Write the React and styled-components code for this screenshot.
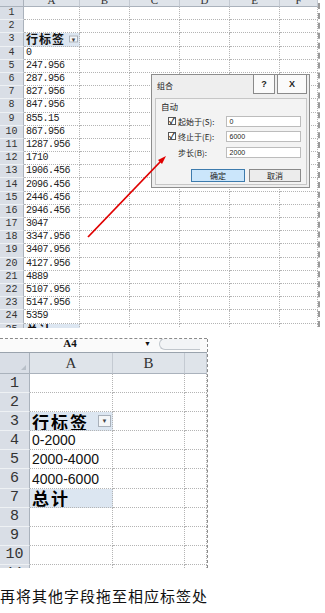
import React from "react";
import styled, { createGlobalStyle } from "styled-components";

const GlobalStyle = createGlobalStyle`
  html, body {
    margin: 0;
    padding: 0;
    background: #ffffff;
  }
  body {
    font-family: "Liberation Sans", "Noto Sans CJK SC", sans-serif;
    color: #111;
  }
`;

const topRows = [
  "", "", "行标签", "0", "247.956", "287.956", "827.956", "847.956", "855.15",
  "867.956", "1287.956", "1710", "1906.456", "2096.456", "2446.456", "2946.456",
  "3047", "3347.956", "3407.956", "4127.956", "4889", "5107.956", "5147.956",
  "5359", "总计"
];
const topCols = ["A", "B", "C", "D", "E", "F"];

const bottomRows = ["", "", "行标签", "0-2000", "2000-4000", "4000-6000", "总计", "", "", "", ""];

const Page = styled.div`
  position: relative;
  width: 325px;
  height: 613px;
  overflow: hidden;
  background: #fff;
`;

/* ---------- top sheet ---------- */

const TopSheet = styled.div`
  height: 328px;
  width: 320px;
  overflow: hidden;
`;

const TopGrid = styled.div`
  margin-top: -7px;
  display: grid;
  grid-template-columns: 24px 56px 50px 50px 50px 50px 38px;
  grid-template-rows: 14px;
  grid-auto-rows: 13.2px;
  width: 318px;
  border-right: 2px dashed #9a9a9a;
`;

const Corner = styled.div`
  background: #d9dee6;
  border-right: 1px solid #aab2bc;
  border-bottom: 1px solid #aab2bc;
`;

const ColHead = styled.div`
  background: #dfe4ea;
  border-right: 1px solid #c4cad2;
  border-bottom: 1px solid #aab2bc;
  font-family: "Liberation Serif", serif;
  font-size: ${(p) => p.$size || 11}px;
  color: #333;
  display: flex;
  align-items: center;
  justify-content: center;
`;

const RowHead = styled.div`
  background: #d9dee6;
  border-right: 1px solid #aab2bc;
  border-bottom: 1px solid #eef1f4;
  font-family: "Liberation Mono", "Liberation Serif", serif;
  font-size: ${(p) => p.$size}px;
  line-height: 1;
  color: #333;
  display: flex;
  align-items: center;
  justify-content: center;
  box-sizing: border-box;
`;

const Cell = styled.div`
  border-right: 1px dotted #b4b4b4;
  border-bottom: 1px dotted #b4b4b4;
  box-sizing: border-box;
  display: flex;
  align-items: center;
  padding-left: 2px;
  position: relative;
  overflow: hidden;
  white-space: nowrap;
  line-height: 1;
  background: ${(p) => (p.$label ? "#dce6f1" : "transparent")};
`;

const TopValue = styled.span`
  font-family: "Liberation Mono", monospace;
  font-size: 10px;
  letter-spacing: -0.5px;
  color: #222;
`;

const TopLabel = styled.span`
  font-family: "Noto Sans CJK SC", sans-serif;
  font-weight: 700;
  font-size: 12px;
  letter-spacing: 1px;
  color: #111;
`;

const FilterButton = styled.span`
  position: absolute;
  right: ${(p) => p.$right}px;
  top: 50%;
  transform: translateY(-50%);
  width: ${(p) => p.$w}px;
  height: ${(p) => p.$h}px;
  border: 1px solid #a8b0ba;
  background: #f4f6f8;
  box-sizing: border-box;
  display: flex;
  align-items: center;
  justify-content: center;
  font-size: 6px;
  color: #444;
`;

/* ---------- dialog ---------- */

const Dialog = styled.div`
  position: absolute;
  left: 151px;
  top: 74px;
  width: 159px;
  height: 114px;
  box-sizing: border-box;
  background: #eeeeee;
  border: 1px solid #8c8c8c;
  display: flex;
  flex-direction: column;
  font-family: "Noto Sans CJK SC", sans-serif;
  color: #222;
`;

const TitleBar = styled.div`
  height: 21px;
  display: flex;
  align-items: flex-start;
  padding-left: 5px;
`;

const TitleText = styled.span`
  font-size: 8px;
  line-height: 21px;
`;

const TitleButtons = styled.div`
  margin-left: auto;
  margin-right: 2px;
  display: flex;
  gap: 2px;
`;

const TitleBtn = styled.div`
  width: ${(p) => p.$w}px;
  height: 19px;
  box-sizing: border-box;
  border: 1px solid #8a8a8a;
  border-top: none;
  background: #fafafa;
  display: flex;
  align-items: center;
  justify-content: center;
  font-family: "Liberation Sans", sans-serif;
  font-weight: 700;
  font-size: 9px;
`;

const Frame = styled.div`
  margin: 2px 2px 2px 3px;
  flex: 1;
  border: 1px solid #c6c6c6;
  background: #f3f3f3;
  display: flex;
  flex-direction: column;
  padding: 2px 3px 0 5px;
`;

const GroupLabel = styled.div`
  font-size: 8.5px;
  line-height: 11px;
`;

const FieldRow = styled.div`
  display: flex;
  align-items: center;
  height: 14px;
  margin-top: ${(p) => p.$mt || 0}px;
`;

const Check = styled.span`
  width: 8px;
  height: 8px;
  box-sizing: border-box;
  border: 1px solid #555;
  background: #fff;
  margin-left: 7px;
  display: flex;
  align-items: center;
  justify-content: center;
  font-size: 8px;
  line-height: 1;
  font-weight: 700;
`;

const FieldLabel = styled.span`
  font-size: 8px;
  margin-left: ${(p) => p.$ml}px;
  width: ${(p) => p.$w}px;
  white-space: nowrap;
`;

const Input = styled.div`
  width: 76px;
  height: 11px;
  box-sizing: border-box;
  border: 1px solid #bcbcbc;
  background: #fff;
  font-family: "Liberation Sans", sans-serif;
  font-size: 7px;
  line-height: 9px;
  padding-left: 3px;
  margin-left: auto;
  margin-right: 2px;
`;

const ButtonRow = styled.div`
  display: flex;
  justify-content: flex-end;
  gap: 4px;
  margin-top: 10px;
  margin-right: 2px;
`;

const DlgButton = styled.div`
  width: ${(p) => p.$w}px;
  height: 13px;
  box-sizing: border-box;
  border: 1px solid ${(p) => (p.$primary ? "#3d7bad" : "#8a8a8a")};
  background: ${(p) => (p.$primary ? "#cbe6fb" : "#ececec")};
  font-size: 8px;
  display: flex;
  align-items: center;
  justify-content: center;
`;

/* ---------- bottom sheet ---------- */

const Separator = styled.div`
  margin-top: 10px;
  width: 207px;
  border-top: 1px dashed #8a8a8a;
`;

const BottomSheet = styled.div`
  width: 207px;
  height: 229px;
  overflow: hidden;
  border-right: 1px dashed #8a8a8a;
`;

const NameBar = styled.div`
  height: 13px;
  display: flex;
  align-items: center;
  border-bottom: 1px solid #9aa3ad;
  background: #fafafa;
`;

const NameText = styled.span`
  width: 140px;
  text-align: center;
  font-family: "Liberation Serif", serif;
  font-weight: 700;
  font-size: 11px;
  line-height: 9px;
  margin-top: -5px;
`;

const NameArrow = styled.span`
  font-size: 7px;
  margin-left: 4px;
  margin-top: -4px;
`;

const FxStub = styled.span`
  width: 40px;
  height: 10px;
  margin-left: 8px;
  margin-top: -4px;
  border: 1px solid #c0c6cc;
  border-right: none;
  border-radius: 6px 0 0 6px;
  background: #f2f4f6;
`;

const BottomGrid = styled.div`
  display: grid;
  grid-template-columns: 30px 83px 72px 22px;
  grid-template-rows: 21px;
  grid-auto-rows: 19.1px;
`;

const CornerMark = styled(Corner)`
  position: relative;
  &::after {
    content: "";
    position: absolute;
    right: 3px;
    bottom: 3px;
    border-left: 5px solid transparent;
    border-bottom: 5px solid #b8bfc8;
  }
`;

const BottomValue = styled.span`
  font-family: "Liberation Sans", sans-serif;
  font-size: 14px;
  color: #111;
`;

const BottomLabel = styled.span`
  font-family: "Noto Sans CJK SC", sans-serif;
  font-weight: 700;
  font-size: 17px;
  line-height: 17px;
  letter-spacing: 2px;
  color: #000;
`;

const Caption = styled.p`
  margin: 20px 0 0 0;
  font-family: "Noto Sans CJK SC", sans-serif;
  font-size: 15px;
  letter-spacing: 1px;
  line-height: 16px;
  color: #111;
  white-space: nowrap;
`;

const ArrowLayer = styled.svg`
  position: absolute;
  left: 0;
  top: 0;
  pointer-events: none;
`;

const isLabel = (v) => v === "行标签" || v === "总计";

function TopSheetView() {
  return (
    <TopSheet>
      <TopGrid>
        <Corner />
        {topCols.map((c) => (
          <ColHead key={c}>{c}</ColHead>
        ))}
        {topRows.map((v, i) => (
          <React.Fragment key={i}>
            <RowHead $size={10}>{i + 1}</RowHead>
            <Cell $label={isLabel(v)}>
              {isLabel(v) ? <TopLabel>{v}</TopLabel> : <TopValue>{v}</TopValue>}
              {v === "行标签" && (
                <FilterButton $right={1} $w={9} $h={7}>▼</FilterButton>
              )}
            </Cell>
            <Cell />
            <Cell />
            <Cell />
            <Cell />
            <Cell />
          </React.Fragment>
        ))}
      </TopGrid>
    </TopSheet>
  );
}

function GroupDialog() {
  return (
    <Dialog>
      <TitleBar>
        <TitleText>组合</TitleText>
        <TitleButtons>
          <TitleBtn $w={22}>?</TitleBtn>
          <TitleBtn $w={30}>X</TitleBtn>
        </TitleButtons>
      </TitleBar>
      <Frame>
        <GroupLabel>自动</GroupLabel>
        <FieldRow $mt={2}>
          <Check>✓</Check>
          <FieldLabel $ml={2} $w={48}>起始于(S):</FieldLabel>
          <Input>0</Input>
        </FieldRow>
        <FieldRow $mt={1}>
          <Check>✓</Check>
          <FieldLabel $ml={2} $w={48}>终止于(E):</FieldLabel>
          <Input>6000</Input>
        </FieldRow>
        <FieldRow $mt={2}>
          <FieldLabel $ml={17} $w={48}>步长(B):</FieldLabel>
          <Input>2000</Input>
        </FieldRow>
        <ButtonRow>
          <DlgButton $w={54} $primary>确定</DlgButton>
          <DlgButton $w={52}>取消</DlgButton>
        </ButtonRow>
      </Frame>
    </Dialog>
  );
}

function BottomSheetView() {
  return (
    <BottomSheet>
      <NameBar>
        <NameText>A4</NameText>
        <NameArrow>▼</NameArrow>
        <FxStub />
      </NameBar>
      <BottomGrid>
        <CornerMark />
        <ColHead $size={15}>A</ColHead>
        <ColHead $size={15}>B</ColHead>
        <ColHead />
        {bottomRows.map((v, i) => (
          <React.Fragment key={i}>
            <RowHead $size={15}>{i + 1}</RowHead>
            <Cell $label={isLabel(v)}>
              {isLabel(v) ? <BottomLabel>{v}</BottomLabel> : <BottomValue>{v}</BottomValue>}
              {v === "行标签" && (
                <FilterButton $right={1} $w={13} $h={12}>▼</FilterButton>
              )}
            </Cell>
            <Cell />
            <Cell />
          </React.Fragment>
        ))}
      </BottomGrid>
    </BottomSheet>
  );
}

export default function App() {
  return (
    <Page>
      <GlobalStyle />
      <TopSheetView />
      <Separator />
      <BottomSheetView />
      <Caption>再将其他字段拖至相应标签处</Caption>
      <GroupDialog />
      <ArrowLayer width="325" height="613" viewBox="0 0 325 613">
        <line x1="88" y1="237" x2="161" y2="161" stroke="#e00000" strokeWidth="1.8" />
        <polygon points="166,156 158,160 162,164" fill="#e00000" />
      </ArrowLayer>
    </Page>
  );
}
